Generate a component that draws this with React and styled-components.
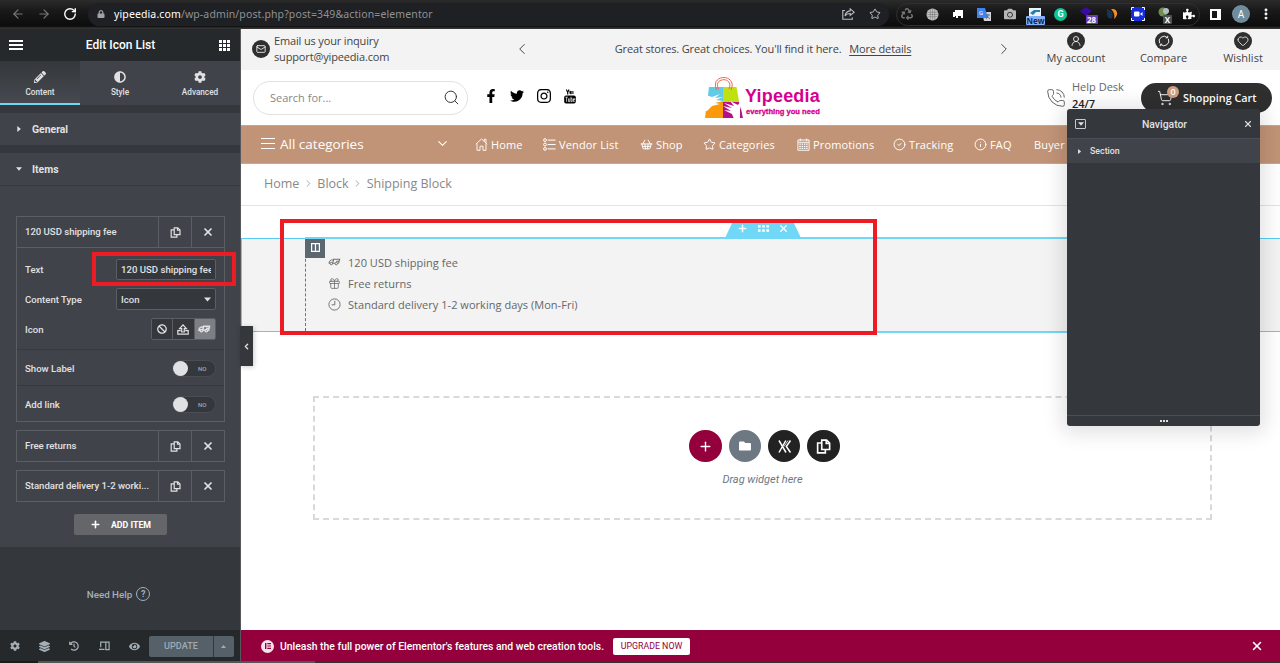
// Required Imports
import React from "react";
import styled, { createGlobalStyle, css } from "styled-components";
import {
  FaPencilAlt,
  FaAdjust,
  FaCog,
  FaLayerGroup,
  FaHistory,
  FaEye,
  FaFacebookF,
  FaTwitter,
  FaInstagram,
  FaBan,
  FaLock,
  FaRecycle,
  FaCamera,
  FaPuzzlePiece,
  FaFolder,
} from "react-icons/fa";
import {
  ArrowLeft,
  ArrowRight,
  RotateCw,
  Star,
  Search,
  Mail,
  UserRound,
  Heart,
  ShoppingCart,
  PhoneCall,
  ShoppingBasket,
  CircleCheck,
  Info,
  Gift,
  ChevronLeft,
  ChevronRight,
  ChevronDown,
  Plus,
  X,
  EllipsisVertical,
} from "lucide-react";
//------------------------------------------------------------------------------------------------------------------------------------------------------------------------------

// Drawn icons
const CopyIcon = ({ size = 11 }) => (
  <svg width={size} height={size} viewBox="0 0 12 12" fill="none" stroke="currentColor" strokeWidth="1.3">
    <path d="M4.6.9h3.9l2.4 2.3v5.2H4.6z" />
    <path d="M8.2 1v2.5h2.6M4.400 3.200H1.300v7.900h6.200V8.600" />
  </svg>
);

const ShareIcon = () => (
  <svg width="13" height="12" viewBox="0 0 13 12" fill="none" stroke="currentColor" strokeWidth="1.100">
    <path d="M3 2.500H.8v8.700h9.500V9.400" />
    <path d="M8.200.9l4 3.300-4 3.200V5.500C5.600 5.400 4.100 6.300 3 8c.3-2.700 2-4.700 5.200-5.100z" />
  </svg>
);

const UploadIcon = () => (
  <svg width="12" height="11" viewBox="0 0 12 11" fill="none" stroke="currentColor" strokeWidth="1.200">
    <path d="M3.800 6.700H.8v3.500h10.400V6.700h-3" />
    <path d="M4.700 8V4.600H2.600L6 .9l3.400 3.700H7.300V8z" />
  </svg>
);

const TruckIcon = ({ size = 12, stroke = 1 }) => (
  <svg width={size} height={size} viewBox="0 0 14 14" fill="none" stroke="currentColor" strokeWidth={stroke}>
    <path d="M5.500 3.500h7.700M6.200 3.500L5 7.800M12.500 3.500l-1 4.300h-1.200M7.500 7.800H5M2.200 7.800H1l.6-2.200 2.200-1.300h2M8.800 5.700h3.200" />
    <circle cx="3.600" cy="8.200" r="1.300" />
    <circle cx="8.900" cy="8.200" r="1.300" />
  </svg>
);

const ClockIcon = () => (
  <svg width="13" height="13" viewBox="0 0 13 13" fill="none" stroke="currentColor" strokeWidth=".9">
    <circle cx="6.500" cy="6.500" r="5.600" />
    <path d="M6.800 2.800v4H3.600" />
  </svg>
);

const HomeIcon = () => (
  <svg width="13" height="13" viewBox="0 0 13 13" fill="none" stroke="currentColor" strokeWidth=".9">
    <path d="M.8 6.200L6.500 1l5.700 5.200M2 5.500v6.800h3V8.200h3v4.100h3V5.500M9.300 3.300V1.200H11v3.600" />
  </svg>
);

const VendorIcon = () => (
  <svg width="13" height="13" viewBox="0 0 13 13" fill="none" stroke="currentColor" strokeWidth="1">
    <circle cx="2" cy="2.100" r="1.400" />
    <circle cx="2" cy="6.500" r="1.400" />
    <circle cx="2" cy="10.900" r="1.400" />
    <path d="M4.600 2.100h8M4.600 6.500h8M4.600 10.900h8" />
  </svg>
);

const CalendarIcon = () => (
  <svg width="13" height="13" viewBox="0 0 13 13" fill="none" stroke="currentColor" strokeWidth=".9">
    <path d="M.9 2h11.200v10.300H.9zM3.300.5v2.700M9.700.5v2.700M1 4.300h11" />
    <path d="M2.300 6.200h8.400M2.300 8.300h8.400M2.300 10.400h8.400" strokeWidth="1.300" strokeDasharray="1.500 .8" />
  </svg>
);

const CompareIcon = () => (
  <svg width="12" height="12" viewBox="0 0 12 12" fill="none" stroke="currentColor" strokeWidth=".9">
    <path d="M1.600 8.200A4.900 4.900 0 0 1 9.300 2.500M10.400 3.800A4.900 4.900 0 0 1 2.700 9.500" />
    <path d="M9.700.8v2H7.800M2.300 11.200v-2h1.900" />
  </svg>
);

const DevicesIcon = () => (
  <svg width="11" height="10" viewBox="0 0 11 10" fill="none" stroke="currentColor" strokeWidth="1.200">
    <path d="M1.700 6.300V1.200h4.700M0 8.300h5.500M6.800 1.200h3.300v7.500H6.800z" />
  </svg>
);

const YoutubeIcon = () => (
  <svg width="12" height="15" viewBox="0 0 12 15">
    <path
      d="M2.400.5l1.300 3v2M5 .5l-1.300 3M6 2.400v2.400M7.100 2v2.800h.4M8.900 2v3M5.500 2.200h.9"
      fill="none"
      stroke="#000"
      strokeWidth="1.1"
    />
    <rect x=".2" y="6.500" width="11.600" height="8" rx="1.800" />
    <path
      d="M1.400 8.200h2.400M2.600 8.200v4.600M4.500 9.400v3.200h1.300V9.400M7 7.800v4.800h1.200V9.700H7M10.700 12.500H9.500V9.700h1.200v1.200H9.500"
      fill="none"
      stroke="#fff"
      strokeWidth=".7"
    />
  </svg>
);

const GlobeIcon = () => (
  <svg width="13" height="13" viewBox="0 0 13 13">
    <circle cx="6.500" cy="6.500" r="6" fill="#c4c4c4" />
    <path
      d="M1 4.300h11M.5 6.500h12M1 8.700h11M4.300 1v11M6.500.5v12M8.700 1v11"
      fill="none"
      stroke="#777"
      strokeWidth=".6"
    />
  </svg>
);

const LogoBag = () => (
  <svg width="39" height="43" viewBox="0 0 39 43">
    <path d="M5 11h14v15.500H3z" fill="#5fcbe4" />
    <path d="M19 11h13.500l2.700 15H19z" fill="#bfe111" />
    <path d="M3 26h16v16H1z" fill="#fb990d" />
    <path d="M19 26h16.200L38.500 42H19z" fill="#b5108b" />
    {/* hands reaching over the bag */}
    <path d="M2 19l6 2 8-3-5 4 8-1-7 3 7 1-8 2 5 1-8 2-5 5H0z" fill="#fff" />
    <path d="M36 26l-2 3-8-4 4 5-10-3 8 5-9-2 8 5-7-1 8 4 2 5h6z" fill="#fff" />
    <g fill="none" stroke="#ee6748" strokeWidth="1">
      <path d="M12.500 14C8.500 4 16 1.500 20 1.500S31 5 27 14" />
      <path d="M14.500 13C11 5.500 17 3.700 20 3.700s8 2.500 5 9.300" />
    </g>
    <path d="M36.500 33l1.700 9" stroke="#b5108b" strokeWidth="1.200" />
  </svg>
);

const XIcon = () => (
  <svg width="15" height="15" viewBox="0 0 15 15" fill="none" stroke="#fff" strokeWidth="1.500">
    <path d="M2 1.500l7 12M8.800 1.500L2 13.500M13.500 1.500L9.300 7.500l4.200 6" />
    <path d="M11 1.500L7 7.500" strokeWidth=".8" />
  </svg>
);

const GridDots = ({ cols, rows, cell, gap }) => {
  const dots = [];
  for (let y = 0; y < rows; y++) {
    for (let x = 0; x < cols; x++) dots.push([x * (cell + gap), y * (cell + gap)]);
  }
  return (
    <svg width={cols * (cell + gap) - gap} height={rows * (cell + gap) - gap} fill="currentColor">
      {dots.map(([x, y]) => (
        <rect key={`${x}-${y}`} x={x} y={y} width={cell} height={cell} />
      ))}
    </svg>
  );
};

const Lines = ({ w, h, stroke }) => (
  <svg width={w} height={h} fill="none" stroke="currentColor" strokeWidth={stroke}>
    <path d={`M0 ${stroke / 2}h${w}M0 ${h / 2}h${w}M0 ${h - stroke / 2}h${w}`} />
  </svg>
);

const Caret = ({ dir = "down", size = 6 }) => (
  <svg width={size} height={size} viewBox="0 0 6 6" fill="currentColor">
    <path d={dir === "down" ? "M0 1.300h6L3 4.700z" : dir === "up" ? "M0 4.700h6L3 1.300z" : "M1.300 0v6L4.900 3z"} />
  </svg>
);
//------------------------------------------------------------------------------------------------------------------------------------------------------------------------------

// Page data
const navItems = [
  { label: "Home", icon: <HomeIcon />, width: 48 },
  { label: "Vendor List", icon: <VendorIcon />, width: 77 },
  { label: "Shop", icon: <ShoppingBasket size={13} strokeWidth={1.8} />, width: 43 },
  { label: "Categories", icon: <Star size={13} strokeWidth={1.8} />, width: 74 },
  { label: "Promotions", icon: <CalendarIcon />, width: 76 },
  { label: "Tracking", icon: <CircleCheck size={13} strokeWidth={1.8} />, width: 61 },
  { label: "FAQ", icon: <Info size={13} strokeWidth={1.8} />, width: 40 },
  { label: "Buyer", width: 60 },
];

const listItems = [
  { label: "120 USD shipping fee", icon: <TruckIcon size={13} /> },
  { label: "Free returns", icon: <Gift size={13} strokeWidth={1.4} /> },
  { label: "Standard delivery 1-2 working days (Mon-Fri)", icon: <ClockIcon /> },
];

const accountLinks = [
  { label: "My account", icon: <UserRound size={12} strokeWidth={1.6} />, width: 58 },
  { label: "Compare", icon: <CompareIcon />, width: 46 },
  { label: "Wishlist", icon: <Heart size={12} strokeWidth={1.6} />, width: 42 },
];
//------------------------------------------------------------------------------------------------------------------------------------------------------------------------------

const BrowserBar = () => (
  <Browser>
    <NavButtons>
      <ArrowLeft size={14} color="#77787a" />
      <ArrowRight size={14} color="#77787a" />
      <RotateCw size={14} color="#fff" strokeWidth={2.4} />
    </NavButtons>
    <Address>
      <FaLock size={8} color="#a0a2a5" />
      <p>
        <b>yipeedia.com</b>/wp-admin/post.php?post=349&amp;action=elementor
      </p>
      <ShareIcon />
      <Star size={12} strokeWidth={2} />
    </Address>
    <Extensions>
      <FaRecycle size={12} color="#77787a" />
      <GlobeIcon />
      <svg width="12" height="12" viewBox="0 0 12 12" fill="#fff">
        <path d="M3 2h8v6H3zM1 4h2v5H1zM4 8h2v2H4zM9 8h2v2H9z" />
      </svg>
      <svg width="14" height="13" viewBox="0 0 14 13">
        <path d="M5 4h9v9H7z" fill="#cfd2d6" />
        <path d="M0 0h8l3 10H0z" fill="#3f82ee" />
        <path d="M9 7h4M11 6v1c0 2-1 3-2 4M10 8l3 3" fill="none" stroke="#5c6670" strokeWidth=".8" />
        <text x="2" y="7" fontSize="6" fontFamily="Roboto" fill="#fff">
          G
        </text>
      </svg>
      <FaCamera size={12} color="#b6b6b6" />
      <ExtBadge $bg="#82b1f8" $color="#14264e" $w={19}>
        <svg width="12" height="8" viewBox="0 0 12 8">
          <path d="M0 0h12v8H0z" fill="#e9f4fa" />
          <path d="M1 5l4-3h6v2H7L4 7z" fill="#2b7caa" />
        </svg>
        <span>New</span>
      </ExtBadge>
      <Grammar>G</Grammar>
      <ExtBadge $bg="#6a3cb9" $color="#fff" $w={12}>
        <svg width="13" height="10" viewBox="0 0 13 10">
          <path d="M6 0l6 4-6 5-6-5z" fill="#3b0ba0" />
        </svg>
        <span>28</span>
      </ExtBadge>
      <svg width="12" height="12" viewBox="0 0 12 12">
        <path d="M1 1c5 1 7 5 5 9-4 2-5-2-5-4z" fill="#173454" />
        <path d="M5 1c7-1 8 6 3 10 1-4 0-7-3-10z" fill="#f58d20" />
      </svg>
      <svg width="14" height="14" viewBox="0 0 14 14">
        <rect width="14" height="14" rx="1" fill="#162ddc" />
        <rect x="3" y="4.500" width="5.500" height="5" rx="1" fill="#fff" />
        <path d="M9 7l2.500-2v4z" fill="#fff" />
        <path d="M.5 3V.5H3M11 .5h2.500V3M13.500 11v2.500H11M3 13.500H.5V11" fill="none" stroke="#fff" />
      </svg>
      <ExtBadge $bg="#4d5156" $color="#fff" $w={9}>
        <svg width="12" height="11" viewBox="0 0 12 11">
          <circle cx="5" cy="5" r="4.500" fill="#718c50" />
          <circle cx="8" cy="4" r="3" fill="#b0bdc9" />
        </svg>
        <span>X</span>
      </ExtBadge>
      <FaPuzzlePiece size={12} color="#fff" />
    </Extensions>
    <SidePanelIcon />
    <Profile>A</Profile>
    <EllipsisVertical size={14} color="#fff" strokeWidth={3} />
  </Browser>
);

const RepeaterRow = ({ label }) => (
  <RepeaterHead>
    <span>{label}</span>
    <button>
      <CopyIcon size={11} />
    </button>
    <button>
      <X size={12} strokeWidth={3.4} />
    </button>
  </RepeaterHead>
);

const EditorPanel = () => (
  <Panel>
    <PanelHeader>
      <Lines w={14} h={10} stroke={2} />
      <h1>Edit Icon List</h1>
      <GridDots cols={3} rows={3} cell={3} gap={1} />
    </PanelHeader>
    <Tabs>
      <Tab $active>
        <FaPencilAlt size={12} />
        Content
      </Tab>
      <Tab>
        <FaAdjust size={12} />
        Style
      </Tab>
      <Tab>
        <FaCog size={12} />
        Advanced
      </Tab>
    </Tabs>
    <SectionTitle>
      <Caret dir="right" />
      General
    </SectionTitle>
    <SectionTitle>
      <Caret />
      Items
    </SectionTitle>
    <Controls>
      <Repeater>
        <RepeaterRow label="120 USD shipping fee" />
        <Field $h={29} $top={7} $bottom={1}>
          Text
          <TextInput>
            <span>120 USD shipping fee</span>
          </TextInput>
        </Field>
        <Field $h={31} $bottom={1}>
          Content Type
          <Select>
            Icon
            <Caret size={7} />
          </Select>
        </Field>
        <Field $h={34} $bottom={6}>
          Icon
          <IconChoice>
            <li>
              <FaBan size={10} />
            </li>
            <li>
              <UploadIcon />
            </li>
            <li className="selected">
              <TruckIcon size={13} stroke={1.5} />
            </li>
          </IconChoice>
        </Field>
        <Field $h={35} $top={1} $line>
          Show Label
          <Switch>NO</Switch>
        </Field>
        <Field $h={35} $top={1} $line>
          Add link
          <Switch>NO</Switch>
        </Field>
      </Repeater>
      <Repeater>
        <RepeaterRow label="Free returns" />
      </Repeater>
      <Repeater>
        <RepeaterRow label="Standard delivery 1-2 worki..." />
      </Repeater>
      <AddItem>
        <Plus size={11} strokeWidth={3.4} />
        ADD ITEM
      </AddItem>
    </Controls>
    <NeedHelp>
      Need Help <span>?</span>
    </NeedHelp>
    <PanelFooter>
      <FaCog size={10} />
      <FaLayerGroup size={11} />
      <FaHistory size={10} />
      <DevicesIcon />
      <FaEye size={11} />
      <Update>
        <b>UPDATE</b>
        <i>
          <Caret dir="up" size={5} />
        </i>
      </Update>
    </PanelFooter>
    <InputHighlight />
    <Collapse>
      <ChevronLeft size={9} strokeWidth={3.6} />
    </Collapse>
  </Panel>
);

const NavigatorWindow = () => (
  <Navigator>
    <header>
      <DockButton>
        <Caret size={6} />
      </DockButton>
      Navigator
      <X size={10} strokeWidth={2.6} />
    </header>
    <div className="row">
      <Caret dir="right" size={5} />
      Section
    </div>
    <footer>
      <GridDots cols={3} rows={1} cell={2} gap={1} />
    </footer>
  </Navigator>
);

const App = () => {
  return (
    <>
      <GlobalStyle />
      <Screen>
        <BrowserBar />
        <Workspace>
          <EditorPanel />
          <Site>
            <TopBar>
              <Inquiry>
                <RoundIcon>
                  <Mail size={10} strokeWidth={2} />
                </RoundIcon>
                <p>
                  Email us your inquiry
                  <br />
                  support@yipeedia.com
                </p>
              </Inquiry>
              <Promo>
                <ChevronLeft size={18} strokeWidth={1.3} />
                <p>
                  Great stores. Great choices. You'll find it here. <u>More details</u>
                </p>
                <ChevronRight size={18} strokeWidth={1.3} />
              </Promo>
              <Account>
                {accountLinks.map((link) => (
                  <AccountLink key={link.label} $w={link.width}>
                    <RoundIcon>{link.icon}</RoundIcon>
                    <span>{link.label}</span>
                  </AccountLink>
                ))}
              </Account>
            </TopBar>
            <SiteHeader>
              <SearchBox>
                Search for...
                <Search size={17} strokeWidth={1.4} color="#333" />
              </SearchBox>
              <Social>
                <FaFacebookF size={14} />
                <FaTwitter size={14} />
                <FaInstagram size={16} />
                <YoutubeIcon />
              </Social>
              <Logo>
                <LogoBag />
                <div>
                  <h2>Yipeedia</h2>
                  <p>everything you need</p>
                </div>
              </Logo>
              <HelpDesk>
                <PhoneCall size={20} strokeWidth={1.2} />
                <p>
                  Help Desk
                  <b>24/7</b>
                </p>
              </HelpDesk>
              <Cart>
                <ShoppingCart size={16} strokeWidth={1.4} />
                <em>0</em>
                Shopping Cart
              </Cart>
            </SiteHeader>
            <MainNav>
              <AllCategories>
                <Lines w={14} h={11} stroke={1} />
                <span>All categories</span>
                <ChevronDown size={15} strokeWidth={1.7} />
              </AllCategories>
              {navItems.map((item) => (
                <NavItem key={item.label} $w={item.width}>
                  {item.icon}
                  {item.label}
                </NavItem>
              ))}
            </MainNav>
            <Breadcrumb>
              <span>Home</span>
              <ChevronRight size={11} strokeWidth={1.6} />
              <span>Block</span>
              <ChevronRight size={11} strokeWidth={1.6} />
              <span>Shipping Block</span>
              <a>e</a>
            </Breadcrumb>
            <Section>
              <SectionHandle>
                <Plus size={11} strokeWidth={3} />
                <GridDots cols={3} rows={2} cell={2.6} gap={1.6} />
                <X size={11} strokeWidth={3} />
              </SectionHandle>
              <Column>
                <ColumnHandle>
                  <svg width="9" height="9" viewBox="0 0 9 9" fill="none" stroke="#fff" strokeWidth="1.200">
                    <path d="M.6.600h7.800v7.800H.6zM4.500.600v7.800" />
                  </svg>
                </ColumnHandle>
                <IconList>
                  {listItems.map((item) => (
                    <li key={item.label}>
                      {item.icon}
                      {item.label}
                    </li>
                  ))}
                </IconList>
              </Column>
            </Section>
            <DropZone>
              <div className="actions">
                <RoundButton $bg="#93003c">
                  <Plus size={15} strokeWidth={2.2} />
                </RoundButton>
                <RoundButton $bg="#6d7882">
                  <FaFolder size={12} />
                </RoundButton>
                <RoundButton $bg="#222">
                  <XIcon />
                </RoundButton>
                <RoundButton $bg="#222">
                  <CopyIcon size={15} />
                </RoundButton>
              </div>
              <p>Drag widget here</p>
            </DropZone>
            <UpgradeBar>
              <ElementorMark>
                <svg width="6" height="6" viewBox="0 0 6 6" fill="#93003c">
                  <path d="M0 0h1.400v6H0zM2.300 0H6v1.200H2.300zM2.300 2.400H6v1.200H2.300zM2.300 4.800H6V6H2.300z" />
                </svg>
              </ElementorMark>
              <p>Unleash the full power of Elementor's features and web creation tools.</p>
              <button>UPGRADE NOW</button>
              <X size={14} strokeWidth={2.6} />
            </UpgradeBar>
            <SectionHighlight />
            <NavigatorWindow />
          </Site>
        </Workspace>
        <Taskbar />
      </Screen>
    </>
  );
};

//------------------------------------------------------------------------------------------------------------------------------------------------------------------------------
// CSS Styling
const GlobalStyle = createGlobalStyle`
  * {
    box-sizing: border-box;
    margin: 0;
    padding: 0;
  }
  body {
    overflow: hidden;
    font-family: "Open Sans", "Noto Sans", sans-serif;
  }
  svg {
    display: block;
    flex: none;
  }
  button {
    font: inherit;
    color: inherit;
    border: 0;
    background: none;
  }
  ul {
    list-style: none;
  }
`;

const center = css`
  display: flex;
  align-items: center;
  justify-content: center;
`;

const Screen = styled.div`
  width: 1280px;
  height: 663px;
  display: flex;
  flex-direction: column;
  overflow: hidden;
  background: #fff;
`;

const Browser = styled.header`
  height: 29px;
  display: flex;
  align-items: center;
  padding: 0 0 1px 11px;
  background: linear-gradient(#2b2b2b, #1a1a1a 35%, #0c0c0c 90%, #333 97%);
`;

const NavButtons = styled.div`
  display: flex;
  gap: 12px;
  width: 77px;
`;

const Address = styled.div`
  flex: none;
  width: 801px;
  height: 23px;
  border-radius: 12px;
  background: #1f2023;
  display: flex;
  align-items: center;
  gap: 14px;
  padding: 0 8px 0 9px;
  color: #bdbec0;
  p {
    flex: 1;
    margin-left: -5px;
    font: 10.5px "Noto Sans", sans-serif;
    letter-spacing: 0.12px;
    color: #8f9194;
  }
  b {
    font-weight: 400;
    color: #fff;
  }
`;

const Extensions = styled.div`
  flex: none;
  width: 304px;
  height: 23px;
  margin: 0 10px 0 7px;
  padding: 0 4px;
  border: 1px solid #303030;
  border-radius: 12px;
  display: flex;
  align-items: center;
  justify-content: space-between;
`;

const ExtBadge = styled.div`
  position: relative;
  top: -2px;
  span {
    position: absolute;
    top: 8px;
    left: 50%;
    margin-left: ${({ $w }) => ($w > 15 ? -9 : -1)}px;
    width: ${({ $w }) => $w}px;
    height: 9px;
    border-radius: 1px;
    background: ${({ $bg }) => $bg};
    color: ${({ $color }) => $color};
    font: bold 8px/9px "Open Sans", sans-serif;
    text-align: center;
  }
`;

const Grammar = styled.div`
  ${center}
  width: 13px;
  height: 13px;
  border-radius: 50%;
  background: #11c292;
  color: #fff;
  font: bold 9px Roboto, sans-serif;
`;

const SidePanelIcon = styled.div`
  flex: none;
  width: 11px;
  height: 11px;
  border: 2px solid #fff;
  border-right-width: 4px;
`;

const Profile = styled.div`
  ${center}
  flex: none;
  width: 18px;
  height: 18px;
  margin: 0 9px 0 11px;
  border-radius: 50%;
  background: #718d9c;
  color: #fff;
  font: 10px Roboto, sans-serif;
`;

const Workspace = styled.div`
  height: 632px;
  display: flex;
`;

const Taskbar = styled.div`
  height: 2px;
  background: linear-gradient(90deg, #1e1b12 38px, #555 38px, #555 315px, #38302c 315px);
`;

const Panel = styled.aside`
  position: relative;
  z-index: 1;
  width: 241px;
  flex: none;
  display: flex;
  flex-direction: column;
  background: #34383c;
  border-right: 1px solid #55595c;
  color: #e0e1e3;
  font: 500 9.6px Roboto, sans-serif;
`;

const PanelHeader = styled.div`
  height: 32px;
  padding: 0 10px 0 9px;
  display: flex;
  align-items: center;
  justify-content: space-between;
  background: #26292c;
  color: #fff;
  h1 {
    margin-right: 1px;
    font-size: 12px;
    font-weight: 500;
  }
`;

const Tabs = styled.div`
  height: 44px;
  display: flex;
  margin-bottom: 8px;
`;

const Tab = styled.button`
  flex: 1;
  display: flex;
  flex-direction: column;
  align-items: center;
  gap: 3px;
  padding-top: 10px;
  background: #404349;
  font-size: 8.2px;
  line-height: 13px;
  ${({ $active }) =>
    $active &&
    css`
      background: linear-gradient(#34383c, #464a50);
      border-bottom: 2px solid #71d7f7;
    `}
`;

const SectionTitle = styled.h3`
  height: 32px;
  display: flex;
  align-items: center;
  gap: 10px;
  padding-left: 16px;
  background: #404349;
  font-size: 10.4px;
  font-weight: 700;
  & + & {
    margin-top: 8px;
  }
`;

const Controls = styled.div`
  height: 362px;
  border-top: 1px solid #373a3e;
  background: #404349;
  padding: 30px 15px 0 16px;
  display: flex;
  flex-direction: column;
  gap: 8px;
`;

const Repeater = styled.div`
  border: 1px solid #5b5e63;
`;

const RepeaterHead = styled.div`
  height: 30px;
  display: flex;
  span {
    flex: 1;
    line-height: 29px;
    padding-left: 8px;
    white-space: nowrap;
    letter-spacing: -0.03px;
  }
  button {
    ${center}
    flex: none;
    width: 33px;
    border-left: 1px solid #5b5e63;
  }
  &:not(:only-child) {
    height: 31px;
    border-bottom: 1px solid #5b5e63;
  }
`;

const Field = styled.div`
  height: ${({ $h, $top = 0 }) => $h + $top}px;
  padding: ${({ $top = 0, $bottom = 0 }) => `${$top}px 8px ${$bottom}px`};
  display: flex;
  align-items: center;
  justify-content: space-between;
  border-top: ${({ $line }) => ($line ? "1px solid #36393d" : "0")};
`;

const TextInput = styled.div`
  width: 100px;
  height: 21px;
  border: 1px solid #5b5e63;
  border-radius: 2px;
  background: #34383c;
  padding: 0 4px;
  span {
    display: block;
    overflow: hidden;
    white-space: nowrap;
    line-height: 19px;
  }
`;

const Select = styled(TextInput)`
  height: 22px;
  display: flex;
  align-items: center;
  justify-content: space-between;
`;

const IconChoice = styled.ul`
  display: flex;
  width: 65px;
  height: 22px;
  border: 1px solid #5b5e63;
  border-radius: 2px;
  overflow: hidden;
  background: #34383c;
  li {
    ${center}
    flex: 1;
    border-right: 1px solid #5b5e63;
  }
  .selected {
    background: #7c7f83;
    border: 0;
  }
`;

const Switch = styled.div`
  display: flex;
  align-items: center;
  width: 44px;
  height: 17px;
  border-radius: 9px;
  border: 1px solid #4a4d52;
  background: #34383c;
  color: #a4a7ab;
  font-size: 6px;
  &::before {
    content: "";
    width: 15px;
    height: 15px;
    margin-right: 10px;
    border-radius: 50%;
    background: #e0e1e3;
  }
`;

const AddItem = styled.button`
  ${center}
  gap: 10px;
  width: 93px;
  height: 21px;
  margin: 4px auto 0;
  border-radius: 2px;
  background: #64666a;
  color: #fff;
  font-size: 8.8px;
  font-weight: 700;
`;

const NeedHelp = styled.div`
  ${center}
  gap: 4px;
  height: 83px;
  padding: 11px 3px 0 0;
  color: #a4afb7;
  font-size: 9.8px;
  span {
    ${center}
    width: 14px;
    height: 14px;
    border: 1.5px solid #a4afb7;
    border-radius: 50%;
    font-size: 9px;
    font-weight: 700;
  }
`;

const PanelFooter = styled.footer`
  flex: 1;
  display: grid;
  grid-template-columns: repeat(5, 29.8px) 85px;
  align-items: center;
  justify-items: center;
  padding-top: 1px;
  background: #26292c;
  color: #a4afb7;
`;

const Update = styled.div`
  display: flex;
  width: 85px;
  height: 21px;
  border-radius: 2px;
  overflow: hidden;
  background: #556068;
  color: #a0abb3;
  font-size: 9.1px;
  b {
    ${center}
    width: 65px;
    font-weight: 500;
    border-right: 1px solid #34383c;
  }
  i {
    ${center}
    flex: 1;
  }
`;

// Red frames drawn over the editor
const InputHighlight = styled.div`
  position: absolute;
  left: 92px;
  top: 223px;
  width: 144px;
  height: 34px;
  border: 4px solid #ed1c24;
`;

const SectionHighlight = styled.div`
  position: absolute;
  left: 39px;
  top: 190px;
  width: 597px;
  height: 116px;
  border: 4px solid #ed1c24;
`;

const Collapse = styled.div`
  ${center}
  position: absolute;
  left: 240px;
  top: 297px;
  width: 13px;
  height: 40px;
  background: #34383c;
  box-shadow: 1px 1px 5px rgba(0, 0, 0, 0.2);
`;

const Site = styled.main`
  position: relative;
  flex: 1;
  display: flex;
  flex-direction: column;
  background: #fff;
  color: #444;
  font-size: 11px;
`;

const TopBar = styled.div`
  height: 41px;
  display: flex;
  align-items: center;
  padding-bottom: 1px;
  background: #f3f3f3;
`;

const RoundIcon = styled.span`
  ${center}
  width: 18px;
  height: 18px;
  flex: none;
  border-radius: 50%;
  background: #2f2f2f;
  color: #fff;
`;

const Inquiry = styled.div`
  width: 272px;
  padding: 0 0 1px 11px;
  display: flex;
  align-items: center;
  gap: 4px;
  line-height: 16px;
  letter-spacing: -0.15px;
`;

const Promo = styled.div`
  width: 500px;
  margin-right: -2px;
  display: flex;
  align-items: center;
  justify-content: space-between;
  letter-spacing: -0.14px;
  p {
    padding-bottom: 1px;
  }
  u {
    margin-left: 5px;
    text-underline-offset: 2px;
  }
`;

const Account = styled.div`
  flex: 1;
  display: flex;
  justify-content: space-between;
  padding: 0 16px 1px 36px;
`;

const AccountLink = styled.a`
  width: ${({ $w }) => $w}px;
  display: flex;
  flex-direction: column;
  align-items: center;
  line-height: 15px;
  white-space: nowrap;
`;

const SiteHeader = styled.div`
  height: 55px;
  display: flex;
  align-items: center;
  padding: 0 8px 0 12px;
`;

const SearchBox = styled.div`
  width: 215px;
  height: 34px;
  border: 1px solid #e1e1e1;
  border-radius: 17px;
  padding: 0 7px 0 16px;
  display: flex;
  align-items: center;
  justify-content: space-between;
  color: #888;
`;

const Social = styled.div`
  width: 92px;
  margin-left: 16px;
  padding-bottom: 3px;
  display: flex;
  align-items: center;
  justify-content: space-between;
  color: #000;
`;

const Logo = styled.div`
  margin-left: 128px;
  display: flex;
  gap: 2px;
  color: #d6008f;
  font-family: "Liberation Sans", Arial, sans-serif;
  font-weight: 700;
  div {
    width: 80px;
    padding-top: 10px;
  }
  h2 {
    font-size: 18px;
    line-height: 20px;
    letter-spacing: 0.2px;
  }
  p {
    padding-left: 1px;
    font-size: 7.6px;
    line-height: 11px;
    white-space: nowrap;
    -webkit-text-stroke: 0.3px;
  }
`;

const HelpDesk = styled.div`
  display: flex;
  align-items: center;
  gap: 6px;
  margin-left: 221px;
  width: 95px;
  line-height: 17px;
  color: #666;
  white-space: nowrap;
  p {
    padding-bottom: 6px;
  }
  b {
    display: block;
    font-weight: 600;
    color: #222;
  }
`;

const Cart = styled.div`
  position: relative;
  display: flex;
  align-items: center;
  gap: 10px;
  flex: none;
  width: 131px;
  height: 30px;
  padding-left: 16px;
  border-radius: 15px;
  background: #2f2f2f;
  color: #fff;
  font-size: 10.8px;
  font-weight: 600;
  white-space: nowrap;
  em {
    ${center}
    position: absolute;
    left: 26px;
    top: 3px;
    width: 12px;
    height: 12px;
    border-radius: 50%;
    background: #cf9f7f;
    font: 600 9px "Open Sans", sans-serif;
  }
`;

const MainNav = styled.nav`
  height: 39px;
  display: flex;
  align-items: center;
  gap: 20px;
  padding: 0 0 1px 20px;
  background: #c19477;
  border: solid #cba58c;
  border-width: 1px 0;
  color: #fff;
  overflow: hidden;
`;

const AllCategories = styled.div`
  width: 194px;
  display: flex;
  align-items: center;
  gap: 5px;
  padding: 0 5px 1px 0;
  font-size: 13.5px;
  font-weight: 500;
  span {
    flex: 1;
  }
`;

const NavItem = styled.a`
  flex: none;
  width: ${({ $w }) => $w}px;
  display: flex;
  align-items: center;
  gap: 3px;
  white-space: nowrap;
  font-weight: 500;
  letter-spacing: 0.15px;
`;

const Breadcrumb = styled.div`
  height: 42px;
  display: flex;
  align-items: center;
  padding: 0 20px 2px 23px;
  border-bottom: 1px solid #e4e4e4;
  color: #888;
  font-size: 12.5px;
  gap: 3.5px;
  a {
    margin-left: auto;
    color: #444;
    font-size: 11px;
  }
`;

const Section = styled.section`
  position: relative;
  flex: none;
  height: 94px;
  margin-top: 32px;
  padding: 0 54px 0 63px;
  border: solid #5accf4;
  border-width: 1px 0 1px 1px;
  background: #f3f3f3;
`;

const SectionHandle = styled.div`
  position: absolute;
  left: 483px;
  top: -17px;
  width: 76px;
  height: 16px;
  padding: 0 12px 3px;
  display: flex;
  align-items: center;
  justify-content: space-between;
  background: #71d7f7;
  clip-path: polygon(10% 0, 90% 0, 100% 100%, 0 100%);
  color: #fff;
`;

const Column = styled.div`
  position: relative;
  height: 96px;
  margin-top: -2px;
  border: solid #71d7f7;
  border-width: 2px 0;
  &::before {
    content: "";
    position: absolute;
    inset: 0 auto 0 0;
    border-left: 1px dashed #1c8fb8;
  }
`;

const ColumnHandle = styled.div`
  ${center}
  position: absolute;
  left: 0;
  top: 0;
  width: 20px;
  height: 19px;
  padding-bottom: 2px;
  background: #5c6870;
`;

const IconList = styled.ul`
  padding: 13px 0 0 23px;
  color: #666;
  letter-spacing: 0.03px;
  li {
    display: flex;
    align-items: center;
    gap: 7px;
    height: 21px;
  }
`;

const DropZone = styled.div`
  width: 899px;
  height: 124px;
  margin: 64px 0 0 72px;
  padding-top: 32px;
  border: 2px dashed #d5dadf;
  text-align: center;
  color: #6d7882;
  font: italic 11px Roboto, sans-serif;
  .actions {
    display: flex;
    justify-content: center;
    gap: 7px;
    margin-bottom: 11px;
    padding-left: 4px;
  }
`;

const RoundButton = styled.button`
  ${center}
  width: 32.4px;
  height: 32.4px;
  border-radius: 50%;
  background: ${({ $bg }) => $bg};
  color: #fff;
`;

const UpgradeBar = styled.div`
  height: 31px;
  margin-top: auto;
  padding: 1px 16px 0 20px;
  display: flex;
  align-items: center;
  background: #93003c;
  color: #fff;
  font: 500 10.4px Roboto, sans-serif;
  p {
    flex: none;
    width: 339px;
    padding-left: 6px;
    white-space: nowrap;
  }
  button {
    width: 77px;
    height: 17px;
    border-radius: 2px;
    background: #fff;
    color: #93003c;
    font-size: 8.8px;
    font-weight: 400;
  }
  > svg {
    margin-left: auto;
  }
`;

const ElementorMark = styled.span`
  ${center}
  width: 13px;
  height: 13px;
  border-radius: 50%;
  background: #f6e2ea;
`;

const Navigator = styled.div`
  position: absolute;
  left: 826px;
  top: 80px;
  width: 193px;
  height: 317px;
  display: flex;
  flex-direction: column;
  border-radius: 3px;
  background: #34383c;
  color: #e0e1e3;
  font: 500 10.4px Roboto, sans-serif;
  box-shadow: 0 2px 20px 5px rgba(0, 0, 0, 0.12);
  header {
    display: flex;
    align-items: center;
    justify-content: space-between;
    height: 30px;
    padding: 1px 7px 0 8px;
    border-bottom: 1px solid #4b4f55;
  }
  .row {
    display: flex;
    align-items: center;
    gap: 8px;
    height: 24px;
    padding-left: 10px;
    background: #404349;
    font-size: 8.8px;
  }
  footer {
    ${center}
    height: 11px;
    margin-top: auto;
    border-top: 1px solid #4b4f55;
  }
`;

const DockButton = styled.span`
  ${center}
  width: 11px;
  height: 10px;
  border: 1px solid #c2cbd2;
  border-radius: 1px;
`;

export default App;
